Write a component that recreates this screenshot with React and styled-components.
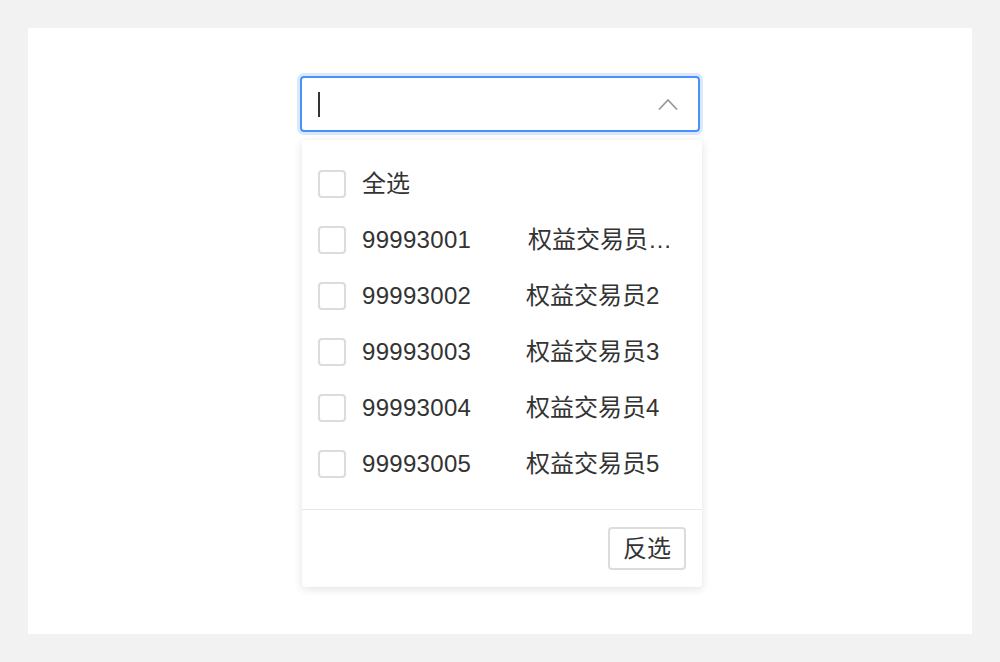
import React from 'react';
import styled, { createGlobalStyle } from 'styled-components';

const GlobalStyle = createGlobalStyle`
  html, body {
    margin: 0;
    padding: 0;
    background: #f2f2f2;
  }
  body {
    font-family: "Liberation Sans", "Noto Sans CJK SC", sans-serif;
    color: #333;
  }
`;

const Page = styled.div`
  width: 1000px;
  height: 662px;
  padding: 28px;
  box-sizing: border-box;
`;

const Panel = styled.main`
  height: 100%;
  background: #fff;
  display: flex;
  flex-direction: column;
  align-items: center;
  padding-top: 48px;
  box-sizing: border-box;
`;

const SelectWrap = styled.div`
  width: 400px;
  display: flex;
  flex-direction: column;
  align-items: center;
  gap: 8px;
`;

const Trigger = styled.div`
  width: 400px;
  height: 56px;
  box-sizing: border-box;
  border: 2px solid #4a90f6;
  border-radius: 4px;
  box-shadow: 0 0 0 3px #d9e8fd;
  display: flex;
  align-items: center;
  justify-content: space-between;
  padding: 0 20px 0 16px;
`;

const Caret = styled.span`
  width: 1.5px;
  height: 25px;
  background: #333;
`;

const Dropdown = styled.div`
  width: 400px;
  margin-left: 4px;
  background: #fff;
  border-radius: 4px;
  box-shadow: 0 2px 10px rgba(0, 0, 0, 0.12);
`;

const List = styled.ul`
  list-style: none;
  margin: 0;
  padding: 16px 0 17px;
`;

const Row = styled.li`
  height: 56px;
  display: flex;
  align-items: center;
  padding: 0 16px;
  gap: 16px;
  font-size: 24px;
`;

const Box = styled.span`
  flex: none;
  width: 28px;
  height: 28px;
  box-sizing: border-box;
  border: 2px solid #dcdcdc;
  border-radius: 4px;
  background: #fff;
`;

const Label = styled.span`
  display: flex;
  align-items: baseline;
  min-width: 0;
  flex: 1;
  line-height: 1.2;
`;

const Code = styled.span`
  flex: none;
  width: 164px;
  letter-spacing: 0.3px;
`;

const Name = styled.span`
  flex: 1;
  min-width: 0;
  white-space: nowrap;
  padding-left: ${p => p.$shift || 0}px;
`;

const Footer = styled.div`
  border-top: 1px solid #e8e8e8;
  display: flex;
  justify-content: flex-end;
  padding: 17px 16px 17px;
`;

const Button = styled.button`
  height: 43px;
  padding: 0 13px;
  border: 2px solid #dcdcdc;
  border-radius: 4px;
  background: #fff;
  color: #333;
  font-family: "Liberation Sans", "Noto Sans CJK SC", sans-serif;
  font-size: 24px;
  line-height: 1;
`;

const ChevronUp = () => (
  <svg width="20" height="13" viewBox="0 0 20 13">
    <path d="M1 11.5 L10 2 L19 11.5" fill="none" stroke="#999" strokeWidth="1.8" />
  </svg>
);

const items = [
  { code: '99993001', name: '权益交易员…', shift: 2 },
  { code: '99993002', name: '权益交易员2' },
  { code: '99993003', name: '权益交易员3' },
  { code: '99993004', name: '权益交易员4' },
  { code: '99993005', name: '权益交易员5' },
];

export default function App() {
  return (
    <>
      <GlobalStyle />
      <Page>
        <Panel>
          <SelectWrap>
            <Trigger>
              <Caret />
              <ChevronUp />
            </Trigger>
            <Dropdown>
              <List>
                <Row>
                  <Box />
                  <Label>全选</Label>
                </Row>
                {items.map(it => (
                  <Row key={it.code}>
                    <Box />
                    <Label>
                      <Code>{it.code}</Code>
                      <Name $shift={it.shift}>{it.name}</Name>
                    </Label>
                  </Row>
                ))}
              </List>
              <Footer>
                <Button>反选</Button>
              </Footer>
            </Dropdown>
          </SelectWrap>
        </Panel>
      </Page>
    </>
  );
}
